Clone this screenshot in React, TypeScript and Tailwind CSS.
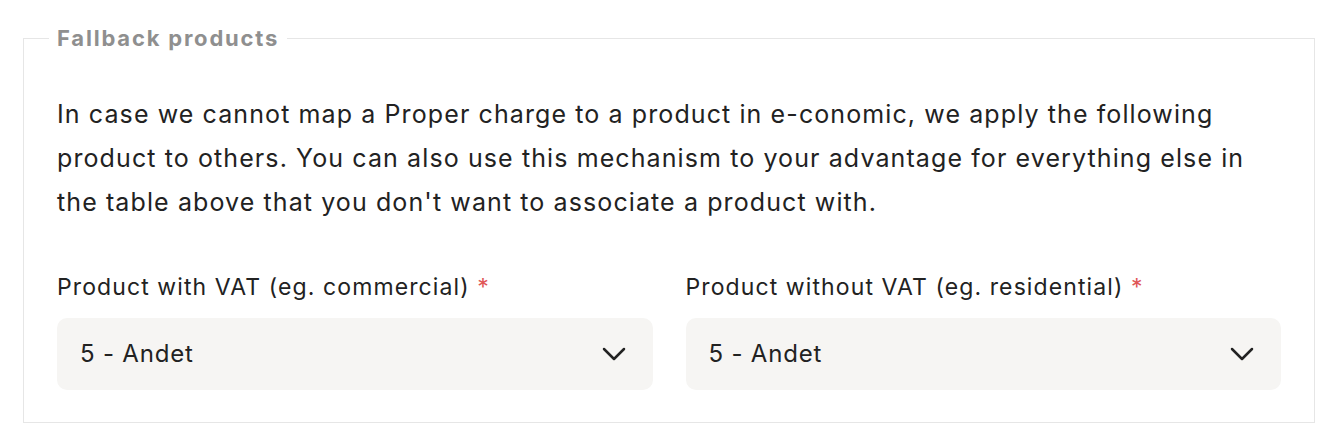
import React from 'react';

function ChevronDown() {
  return (
    <svg width="24" height="24" viewBox="0 0 24 24" fill="none" stroke="#222" strokeWidth="2.5" strokeLinecap="round" strokeLinejoin="round">
      <path d="M2 7l10 10 10-10" />
    </svg>
  );
}

function SelectField({ label, value }: { label: string; value: string }) {
  return (
    <div className="flex flex-col">
      <label className="text-[23px] leading-[30px] tracking-[1.1px] text-[#222]">
        {label} <span className="text-[#e05656]">*</span>
      </label>
      <div className="mt-[16px] flex h-[72px] items-center justify-between rounded-[10px] bg-[#f6f5f3] pl-[23px] pr-[27px]">
        <span className="text-[24px] tracking-[0.8px] text-[#222]">{value}</span>
        <ChevronDown />
      </div>
    </div>
  );
}

export default function App() {
  return (
    <div className="min-h-[448px] bg-white pl-[23px] pr-[29px] pt-[24px]" style={{ fontFamily: 'Inter, "Liberation Sans", sans-serif' }}>
      <fieldset className="border border-[#e6e6e6] px-[33px] pb-[32px]">
        <legend className="-ml-2 px-2 text-[22px] font-bold leading-[28px] tracking-[1.8px] text-[#8f8f8f]">Fallback products</legend>
        <p className="mt-[40px] text-[25px] leading-[44px] tracking-[1.1px] text-[#222]">
          In case we cannot map a Proper charge to a product in e-conomic, we apply the following product to others. You can also use this mechanism to your advantage for everything else in the table above that you don't want to associate a product with.
        </p>
        <div className="mt-[48px] grid grid-cols-2 gap-[33px]">
          <SelectField label="Product with VAT (eg. commercial)" value="5 - Andet" />
          <SelectField label="Product without VAT (eg. residential)" value="5 - Andet" />
        </div>
      </fieldset>
    </div>
  );
}
